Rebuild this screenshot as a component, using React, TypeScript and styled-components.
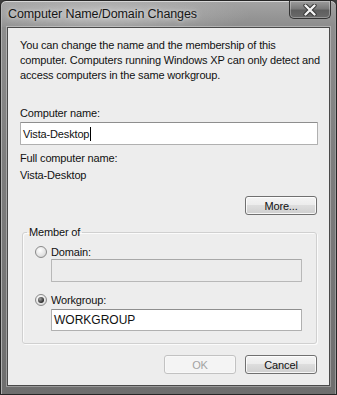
import * as React from 'react';
import styled, { createGlobalStyle } from 'styled-components';

const GlobalStyle = createGlobalStyle`
	html, body {
		margin: 0;
		padding: 0;
		background: #3c3c3c;
	}
	* {
		box-sizing: border-box;
	}
`;

const Window = styled.div`
	width: 337px;
	height: 395px;
	display: flex;
	flex-direction: column;
	border: 1px solid #262626;
	border-radius: 6px 6px 0 0;
	background: linear-gradient(180deg, #a4a4a4 0%, #8e8e8e 6%, #7e7e7e 40%, #6e6e6e 100%);
	box-shadow: inset 0 1px 0 #d8d8d8, inset 1px 0 0 #b0b0b0, inset -1px 0 0 #9a9a9a;
	font-family: 'Liberation Sans', Arial, sans-serif;
	font-size: 11px;
	letter-spacing: -0.15px;
	color: #111;
	overflow: hidden;
`;

const TitleBar = styled.div`
	height: 26px;
	display: flex;
	align-items: flex-start;
	padding-left: 7px;
	background: radial-gradient(ellipse 150px 22px at 100px 14px, rgba(225, 225, 225, 0.55) 0%, rgba(200, 200, 200, 0.25) 60%, rgba(255, 255, 255, 0) 100%);
`;

const Title = styled.div`
	padding-top: 6px;
	font-size: 12.5px;
	letter-spacing: -0.1px;
	color: #161616;
	text-shadow: 0 0 6px #dcdcdc, 0 0 3px #d0d0d0;
`;

const CloseButton = styled.div`
	margin-left: auto;
	margin-right: 5px;
	width: 42px;
	height: 18px;
	display: flex;
	align-items: center;
	justify-content: center;
	border: 1px solid #333;
	border-top: none;
	border-radius: 0 0 5px 5px;
	background: linear-gradient(180deg, #9c9c9c 0%, #7a7a7a 45%, #5e5e5e 55%, #6a6a6a 100%);
	box-shadow: inset 0 0 0 1px rgba(255, 255, 255, 0.3);
`;

const Client = styled.div`
	flex: 1;
	margin: 0 6px 8px 6px;
	border: 1px solid #4a4a4a;
	background: #ededed;
	padding: 10px 11px 0 12px;
	display: flex;
	flex-direction: column;
	box-shadow: 0 0 0 1px rgba(255, 255, 255, 0.3);
`;

const Text = styled.div<{ $gap?: number }>`
	line-height: 15px;
	white-space: nowrap;
	margin-top: ${(p) => p.$gap ?? 0}px;
`;

const Intro = styled(Text)`
	margin-bottom: 23px;
`;

const TextBox = styled.div<{ $disabled?: boolean; $height?: number }>`
	height: ${(p) => p.$height ?? 22}px;
	display: flex;
	align-items: center;
	padding-left: 2px;
	border: 1px solid ${(p) => (p.$disabled ? '#b8b8b8' : '#b0b0b0')};
	border-top-color: ${(p) => (p.$disabled ? '#a8a8a8' : '#8e8e8e')};
	background: ${(p) => (p.$disabled ? '#ececec' : '#ffffff')};
	border-radius: 1px;
`;

const Caret = styled.span`
	display: inline-block;
	width: 1px;
	height: 14px;
	background: #000;
	margin-left: 1px;
`;

const RightRow = styled.div<{ $gap?: number }>`
	display: flex;
	justify-content: flex-end;
	gap: 9px;
	margin-top: ${(p) => p.$gap ?? 0}px;
	padding-right: 1px;
`;

const Button = styled.div<{ $disabled?: boolean }>`
	width: 72px;
	height: 19px;
	display: flex;
	align-items: center;
	justify-content: center;
	border-radius: 3px;
	border: 1px solid ${(p) => (p.$disabled ? '#c2c2c2' : '#707070')};
	color: ${(p) => (p.$disabled ? '#a3a3a3' : '#111')};
	background: ${(p) =>
		p.$disabled
			? '#f4f4f4'
			: 'linear-gradient(180deg, #f4f4f4 0%, #ececec 45%, #dddddd 50%, #cfcfcf 100%)'};
	box-shadow: inset 0 0 0 1px ${(p) => (p.$disabled ? '#f8f8f8' : 'rgba(255,255,255,0.8)')};
`;

const GroupBox = styled.fieldset`
	margin: 10px 1px 0 2px;
	padding: 5px 14px 12px 12px;
	min-width: 0;
	border: 1px solid #d0d0d0;
	border-radius: 3px;
	box-shadow: 1px 1px 0 #fbfbfb inset, 1px 1px 0 #fbfbfb;
`;

const Legend = styled.legend`
	padding: 0 2px;
	margin-left: -8px;
	line-height: 15px;
`;

const RadioRow = styled.div<{ $gap?: number }>`
	display: flex;
	align-items: center;
	gap: 4px;
	height: 13px;
	margin-top: ${(p) => p.$gap ?? 0}px;
`;

const Radio = styled.div<{ $checked?: boolean }>`
	width: 12px;
	height: 12px;
	border-radius: 50%;
	border: 1px solid #8a8a8a;
	background: radial-gradient(circle at 40% 35%, #ffffff 0%, #e2e2e2 60%, #c4c4c4 100%);
	display: flex;
	align-items: center;
	justify-content: center;
	&::after {
		content: '';
		width: 6px;
		height: 6px;
		border-radius: 50%;
		display: ${(p) => (p.$checked ? 'block' : 'none')};
		background: radial-gradient(circle at 35% 35%, #a0a0a0 0%, #2a2a2a 70%);
	}
`;

const Field = styled(TextBox)<{ $gap?: number }>`
	margin-top: ${(p) => p.$gap ?? 0}px;
	margin-left: 16px;
	font-size: 12px;
	letter-spacing: 0;
`;

const App: React.FC = () => {
	return (
		<>
			<GlobalStyle />
			<Window>
				<TitleBar>
					<Title>Computer Name/Domain Changes</Title>
					<CloseButton>
						<svg width='14' height='12' viewBox='0 0 14 12'>
							<path
								d='M2.5 1.5 L11.5 10.5 M11.5 1.5 L2.5 10.5'
								stroke='#333'
								strokeWidth='4.2'
								strokeLinecap='round'
							/>
							<path
								d='M2.5 1.5 L11.5 10.5 M11.5 1.5 L2.5 10.5'
								stroke='#f4f4f4'
								strokeWidth='2.4'
								strokeLinecap='round'
							/>
						</svg>
					</CloseButton>
				</TitleBar>
				<Client>
					<Intro>
						You can change the name and the membership of this
						<br />
						computer. Computers running Windows XP can only detect and
						<br />
						access computers in the same workgroup.
					</Intro>
					<Text>Computer name:</Text>
					<TextBox $height={23} style={{ marginTop: 1 }}>
						Vista-Desktop
						<Caret />
					</TextBox>
					<Text $gap={6}>Full computer name:</Text>
					<Text $gap={2}>Vista-Desktop</Text>
					<RightRow $gap={13}>
						<Button>More...</Button>
					</RightRow>
					<GroupBox>
						<Legend>Member of</Legend>
						<RadioRow>
							<Radio />
							Domain:
						</RadioRow>
						<Field $disabled $height={23} $gap={1} />
						<RadioRow $gap={11}>
							<Radio $checked />
							Workgroup:
						</RadioRow>
						<Field $gap={3}>WORKGROUP</Field>
					</GroupBox>
					<RightRow $gap={11}>
						<Button $disabled>OK</Button>
						<Button>Cancel</Button>
					</RightRow>
				</Client>
			</Window>
		</>
	);
};

export default App;
